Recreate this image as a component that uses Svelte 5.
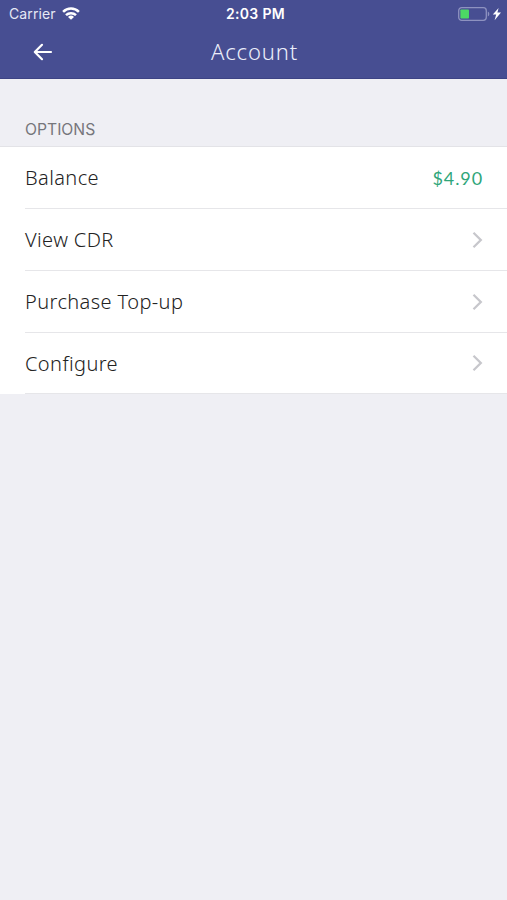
<script>
  let carrier = $state('Carrier')
  let time = $state('2:03 PM')
  let battery = $state(0.35)

  let options = $state([
    { label: 'Balance', value: '$4.90' },
    { label: 'View CDR' },
    { label: 'Purchase Top-up' },
    { label: 'Configure' }
  ])
</script>

<div class="screen">
  <header>
    <div class="status">
      <div class="carrier">
        <span>{carrier}</span>
        <svg class="wifi" width="18" height="13" viewBox="0 0 18 13" fill="none" stroke="#fff" stroke-width="2.5">
          <path d="M1.1 4.8a11.2 11.2 0 0 1 15.8 0" />
          <path d="M4 8.2a7.1 7.1 0 0 1 10 0" />
          <path d="M9 12.8 6 9.9a4.3 4.3 0 0 1 6 0z" fill="#fff" stroke="none" />
        </svg>
      </div>
      <time>{time}</time>
      <svg class="battery" width="44" height="14" viewBox="0 0 44 14" fill="none">
        <rect x="0.7" y="0.7" width="27.6" height="12.6" rx="3" stroke="#8e92c0" stroke-width="1.3" />
        <rect x="2.4" y="2.5" width={24.5 * battery} height="9" rx="0.8" fill="#4cd964" />
        <path d="M29.8 4.5c2 .8 2 4.2 0 5z" fill="#8e92c0" />
        <path d="M40.6 1 34.8 7.6h3.4L36.6 13.2l6.4-7.6h-3.6z" fill="#fff" />
      </svg>
    </div>
    <nav>
      <button aria-label="Back">
        <svg width="20" height="18" viewBox="0 0 20 18" fill="none" stroke="#fff" stroke-width="2.2" stroke-linecap="round" stroke-linejoin="round">
          <path d="M18 9H2M9 1.8 1.8 9 9 16.2" />
        </svg>
      </button>
      <h1>Account</h1>
    </nav>
  </header>

  <h2>OPTIONS</h2>
  <ul>
    {#each options as option}
      <li>
        <div class="row">
          <span class="label">{option.label}</span>
          {#if option.value}
            <span class="value">{option.value}</span>
          {:else}
            <svg width="11" height="18" viewBox="0 0 11 18" fill="none" stroke="#c7c7cc" stroke-width="2.3">
              <path d="M1.5 1.8 8.8 9l-7.3 7.2" />
            </svg>
          {/if}
        </div>
      </li>
    {/each}
  </ul>
</div>

<style>
  :global(body) {
    margin: 0;
    background: #efeff4;
  }

  .screen {
    min-height: 900px;
    background: #efeff4;
    font-family: 'Noto Sans', sans-serif;
  }

  header {
    box-sizing: border-box;
    height: 79px;
    border-bottom: 1px solid #3d4384;
    background: #474e92;
    color: #fff;
  }

  .status {
    display: grid;
    grid-template-columns: 1fr auto 1fr;
    align-items: center;
    box-sizing: border-box;
    height: 27px;
    padding: 0 5px 0 9px;
    font-family: Inter, sans-serif;
    font-size: 14px;
  }

  .carrier {
    display: flex;
    align-items: center;
    gap: 6px;
    color: #e6e8f5;
    letter-spacing: 0.1px;
  }

  time {
    font-weight: 600;
    letter-spacing: 0.3px;
  }

  .battery {
    justify-self: end;
  }

  nav {
    display: grid;
    grid-template-columns: 1fr auto 1fr;
    align-items: center;
    height: 50px;
  }

  button {
    display: flex;
    justify-self: start;
    margin-left: 33px;
    padding: 0;
    border: 0;
    background: none;
  }

  h1 {
    margin: -2px 0 0 2px;
    color: #eceefa;
    font-size: 22px;
    font-weight: 300;
    letter-spacing: 0.85px;
  }

  h2 {
    box-sizing: border-box;
    height: 67px;
    margin: 0;
    padding: 41px 25px 0;
    color: #76767b;
    font-family: Inter, sans-serif;
    font-size: 15.7px;
    font-weight: 400;
    line-height: 20px;
  }

  ul {
    margin: 0;
    padding: 0;
    border-top: 1px solid #e3e3e7;
    background: #fff;
    list-style: none;
  }

  li {
    padding-left: 25px;
  }

  .row {
    display: flex;
    align-items: center;
    justify-content: space-between;
    box-sizing: border-box;
    height: 62px;
    padding-right: 24px;
    border-bottom: 1px solid #e6e6e9;
  }

  li:last-child .row {
    height: 61px;
  }

  .label {
    color: #222;
    font-size: 20px;
    font-weight: 350;
    letter-spacing: 0.4px;
  }

  .value {
    color: #2fa67a;
    font-family: Lato, sans-serif;
    font-size: 18px;
    letter-spacing: 0.9px;
  }
</style>
